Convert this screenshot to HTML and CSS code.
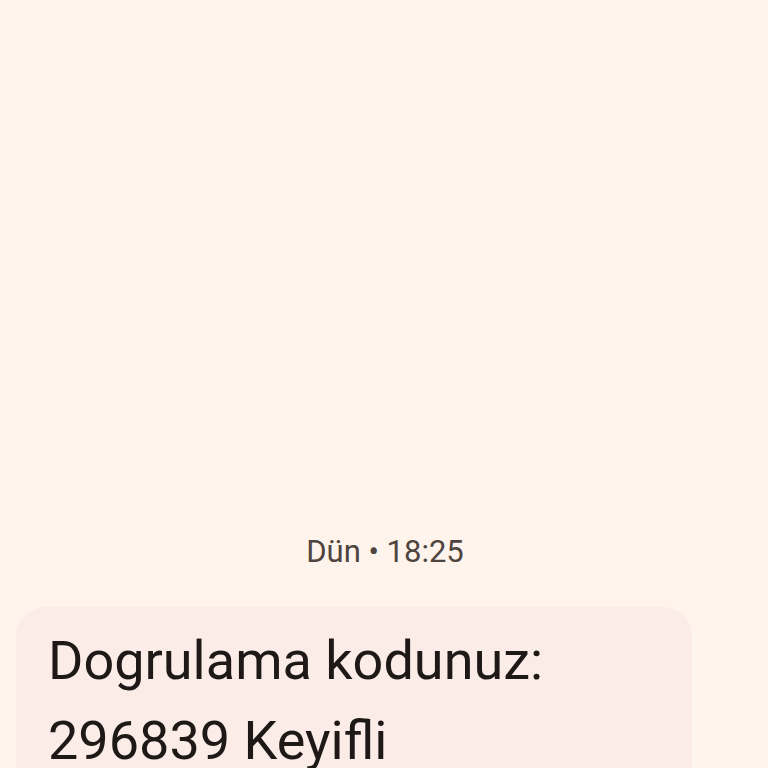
FILE: index.html
```html
<!DOCTYPE html>
<html>
<head>
<meta charset="utf-8">
<link rel="stylesheet" href="styles.css">
</head>
<body>
<div class="screen">
  <div class="stamp">Dün • 18:25</div>
  <div class="bubble">
    <p class="msg">Dogrulama kodunuz:<br>296839 Keyifli</p>
  </div>
</div>
</body>
</html>
```
FILE: styles.css
```css
html, body {
  margin: 0;
  padding: 0;
  background: #fef4ec;
}
.screen {
  width: 768px;
  height: 768px;
  overflow: hidden;
  display: flex;
  flex-direction: column;
  padding-top: 530px;
  box-sizing: border-box;
  font-family: Roboto, "Noto Sans", sans-serif;
}
.stamp {
  text-align: center;
  font-size: 31px;
  line-height: 44px;
  color: #4f4540;
  padding-left: 2px;
}
.bubble {
  margin-top: 33px;
  margin-left: 16px;
  width: 676px;
  background: #fbece8;
  border-radius: 30px;
  padding: 14px 32px 40px;
  box-sizing: border-box;
}
.msg {
  margin: 0;
  font-size: 54px;
  line-height: 80px;
  color: #1e1916;
}
```
